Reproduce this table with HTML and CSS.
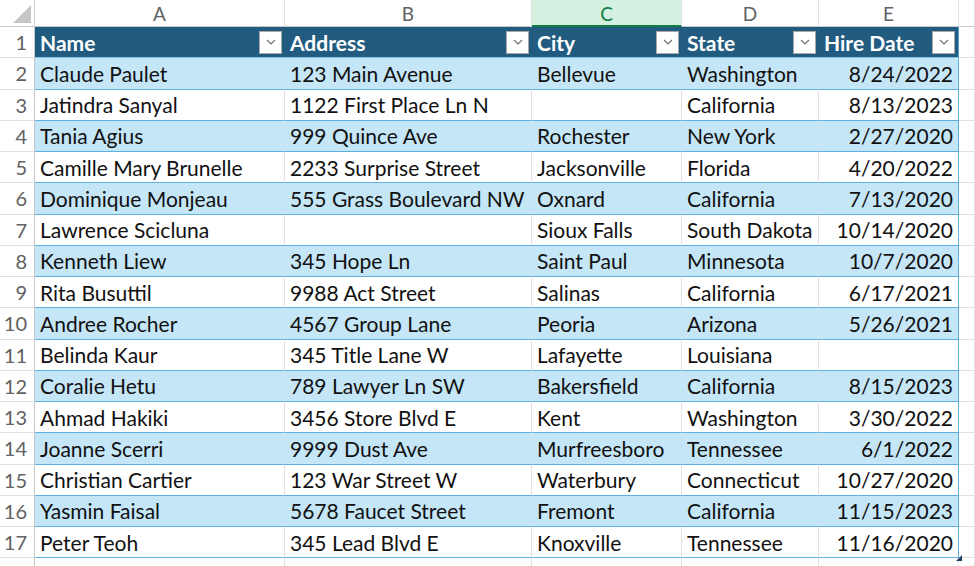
FILE: index.html
```html
<!DOCTYPE html>
<html>
<head>
<meta charset="utf-8">
<link rel="stylesheet" href="styles.css">
</head>
<body>
<div class="sheet">
  <div class="row colhead">
    <div class="corner"><span class="tri"></span></div>
    <div class="ch">A</div>
    <div class="ch">B</div>
    <div class="ch sel">C</div>
    <div class="ch">D</div>
    <div class="ch">E</div>
    <div class="ch"></div>
  </div>
  <div class="row thead">
    <div class="rn">1</div>
    <div class="th"><span>Name</span><span class="fb"><svg viewBox="0 0 10 6" width="10" height="6"><path d="M1 1 L5 5 L9 1" fill="none" stroke="#707070" stroke-width="1.2"/></svg></span></div>
    <div class="th"><span>Address</span><span class="fb"><svg viewBox="0 0 10 6" width="10" height="6"><path d="M1 1 L5 5 L9 1" fill="none" stroke="#707070" stroke-width="1.2"/></svg></span></div>
    <div class="th"><span>City</span><span class="fb"><svg viewBox="0 0 10 6" width="10" height="6"><path d="M1 1 L5 5 L9 1" fill="none" stroke="#707070" stroke-width="1.2"/></svg></span></div>
    <div class="th"><span>State</span><span class="fb"><svg viewBox="0 0 10 6" width="10" height="6"><path d="M1 1 L5 5 L9 1" fill="none" stroke="#707070" stroke-width="1.2"/></svg></span></div>
    <div class="th last"><span>Hire Date</span><span class="fb"><svg viewBox="0 0 10 6" width="10" height="6"><path d="M1 1 L5 5 L9 1" fill="none" stroke="#707070" stroke-width="1.2"/></svg></span></div>
    <div class="c"></div>
  </div>
  <div class="row band"><div class="rn">2</div><div class="td">Claude Paulet</div><div class="td">123 Main Avenue</div><div class="td">Bellevue</div><div class="td">Washington</div><div class="td num last">8/24/2022</div><div class="c"></div></div>
  <div class="row"><div class="rn">3</div><div class="td">Jatindra Sanyal</div><div class="td">1122 First Place Ln N</div><div class="td"></div><div class="td">California</div><div class="td num last">8/13/2023</div><div class="c"></div></div>
  <div class="row band"><div class="rn">4</div><div class="td">Tania Agius</div><div class="td">999 Quince Ave</div><div class="td">Rochester</div><div class="td">New York</div><div class="td num last">2/27/2020</div><div class="c"></div></div>
  <div class="row"><div class="rn">5</div><div class="td">Camille Mary Brunelle</div><div class="td">2233 Surprise Street</div><div class="td">Jacksonville</div><div class="td">Florida</div><div class="td num last">4/20/2022</div><div class="c"></div></div>
  <div class="row band"><div class="rn">6</div><div class="td">Dominique Monjeau</div><div class="td">555 Grass Boulevard NW</div><div class="td">Oxnard</div><div class="td">California</div><div class="td num last">7/13/2020</div><div class="c"></div></div>
  <div class="row"><div class="rn">7</div><div class="td">Lawrence Scicluna</div><div class="td"></div><div class="td">Sioux Falls</div><div class="td">South Dakota</div><div class="td num last">10/14/2020</div><div class="c"></div></div>
  <div class="row band"><div class="rn">8</div><div class="td">Kenneth Liew</div><div class="td">345 Hope Ln</div><div class="td">Saint Paul</div><div class="td">Minnesota</div><div class="td num last">10/7/2020</div><div class="c"></div></div>
  <div class="row"><div class="rn">9</div><div class="td">Rita Busuttil</div><div class="td">9988 Act Street</div><div class="td">Salinas</div><div class="td">California</div><div class="td num last">6/17/2021</div><div class="c"></div></div>
  <div class="row band"><div class="rn">10</div><div class="td">Andree Rocher</div><div class="td">4567 Group Lane</div><div class="td">Peoria</div><div class="td">Arizona</div><div class="td num last">5/26/2021</div><div class="c"></div></div>
  <div class="row"><div class="rn">11</div><div class="td">Belinda Kaur</div><div class="td">345 Title Lane W</div><div class="td">Lafayette</div><div class="td">Louisiana</div><div class="td num last"></div><div class="c"></div></div>
  <div class="row band"><div class="rn">12</div><div class="td">Coralie Hetu</div><div class="td">789 Lawyer Ln SW</div><div class="td">Bakersfield</div><div class="td">California</div><div class="td num last">8/15/2023</div><div class="c"></div></div>
  <div class="row"><div class="rn">13</div><div class="td">Ahmad Hakiki</div><div class="td">3456 Store Blvd E</div><div class="td">Kent</div><div class="td">Washington</div><div class="td num last">3/30/2022</div><div class="c"></div></div>
  <div class="row band"><div class="rn">14</div><div class="td">Joanne Scerri</div><div class="td">9999 Dust Ave</div><div class="td">Murfreesboro</div><div class="td">Tennessee</div><div class="td num last">6/1/2022</div><div class="c"></div></div>
  <div class="row"><div class="rn">15</div><div class="td">Christian Cartier</div><div class="td">123 War Street W</div><div class="td">Waterbury</div><div class="td">Connecticut</div><div class="td num last">10/27/2020</div><div class="c"></div></div>
  <div class="row band"><div class="rn">16</div><div class="td">Yasmin Faisal</div><div class="td">5678 Faucet Street</div><div class="td">Fremont</div><div class="td">California</div><div class="td num last">11/15/2023</div><div class="c"></div></div>
  <div class="row lastrow"><div class="rn">17</div><div class="td">Peter Teoh</div><div class="td">345 Lead Blvd E</div><div class="td">Knoxville</div><div class="td">Tennessee</div><div class="td num last">11/16/2020<span class="handle"></span></div><div class="c"></div></div>
  <div class="row"><div class="rn"></div><div class="c"></div><div class="c"></div><div class="c"></div><div class="c"></div><div class="c"></div><div class="c"></div></div>
</div>
</body>
</html>
```
FILE: styles.css
```css
* { box-sizing: border-box; }
html, body { margin: 0; padding: 0; background: #fff; }
body { width: 975px; height: 566px; overflow: hidden; font-family: "Lato", "Liberation Sans", sans-serif; }
.sheet { display: flex; flex-direction: column; }
.row {
  display: grid;
  grid-template-columns: 35px 250px 247px 150px 137px 140px 1fr;
  height: 31.25px;
  flex: none;
}
.colhead { height: 27px; }
.corner {
  position: relative;
  background: #fff;
  border-right: 1px solid #d4d4d4;
  border-bottom: 1px solid #c8c8c8;
}
.tri {
  position: absolute; right: 3px; bottom: 3px;
  width: 0; height: 0;
  border-left: 18px solid transparent;
  border-bottom: 18px solid #c6c6c6;
}
.ch {
  display: flex; align-items: center; justify-content: center;
  font-size: 19px; color: #616161;
  border-right: 1px solid #e1e1e1;
  border-bottom: 1px solid #c8c8c8;
  background: #fff;
  padding-top: 1px;
}
.ch.sel {
  background: #d3f0e0;
  color: #107c41;
  border-bottom: 2px solid #107c41;
}
.rn {
  display: flex; align-items: center; justify-content: flex-end;
  padding-right: 7px;
  font-size: 20px; color: #616161;
  background: #fff;
  border-right: 1px solid #c8c8c8;
  border-bottom: 1px solid #e1e1e1;
}
.c {
  border-right: 1px solid #e1e1e1;
  border-bottom: 1px solid #e1e1e1;
}
.th {
  display: flex; align-items: center; justify-content: space-between;
  background: #215c80;
  color: #fff;
  font-weight: bold;
  font-size: 21px;
  padding: 0 3px 0 5px;
  border-bottom: 1px solid #86bde3;
}
.th.last { border-right: 1px solid #4f9fd6; }
.fb {
  width: 23px; height: 23px;
  background: #fff;
  border: 1px solid #a8a8a8;
  display: flex; align-items: center; justify-content: center;
}
.td {
  display: flex; align-items: center;
  font-size: 21px; color: #111;
  padding: 0 5px;
  white-space: nowrap; overflow: hidden;
  border-right: 1px solid #e1e1e1;
  border-bottom: 1px solid #5fb0e2;
  background: #fff;
}
.band .td { background: #c5e6f7; border-right-color: #c5e6f7; }
.td.num { justify-content: flex-end; }
.td.last { border-right: 1px solid #5fb0e2; position: relative; overflow: visible; }
.band .td.last { border-right-color: #5fb0e2; }
.handle {
  position: absolute; right: -4px; bottom: -4px;
  width: 0; height: 0;
  border-left: 6px solid transparent;
  border-bottom: 6px solid #1f3f66;
}
```
